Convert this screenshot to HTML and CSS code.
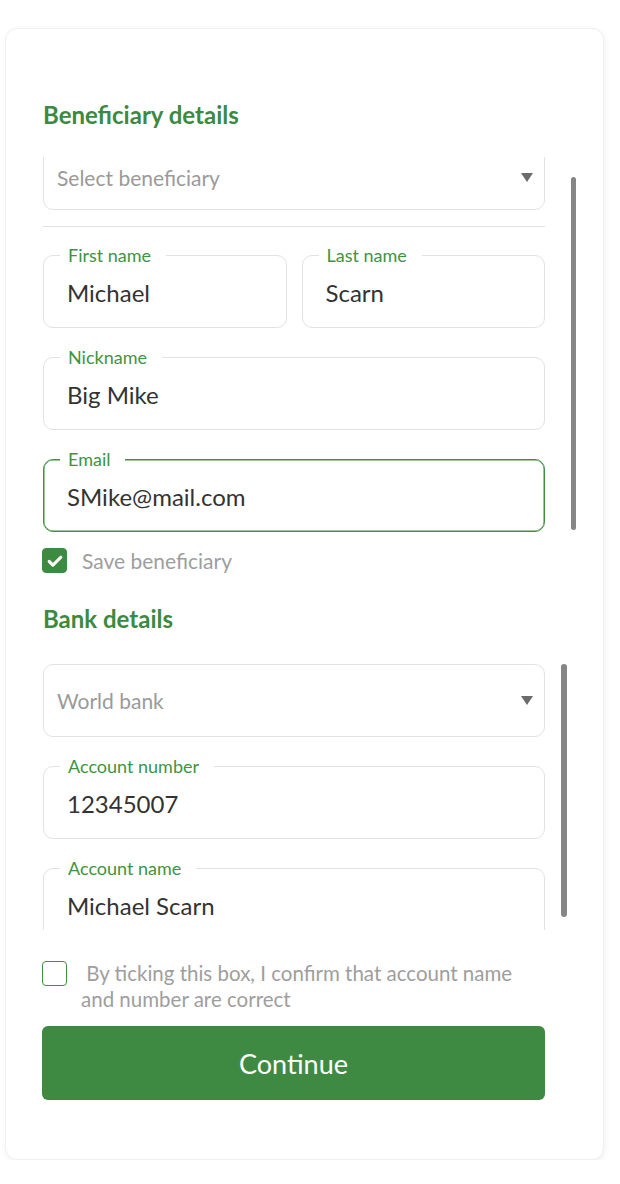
FILE: index.html
```html
<!DOCTYPE html>
<html lang="en">
<head>
<meta charset="utf-8">
<title>Beneficiary details</title>
<link rel="stylesheet" href="styles.css">
</head>
<body>
<div class="card">
  <h2 class="section-title title-beneficiary">Beneficiary details</h2>

  <div class="scroller scroller-one">
    <div class="scroll-content content-one">
      <div class="select select-one">
        <span class="placeholder">Select beneficiary</span>
        <span class="caret"></span>
      </div>
      <div class="divider"></div>
      <div class="row-two">
        <div class="field">
          <span class="label">First name</span>
          <span class="value">Michael</span>
        </div>
        <div class="field">
          <span class="label">Last name</span>
          <span class="value">Scarn</span>
        </div>
      </div>
      <div class="field">
        <span class="label">Nickname</span>
        <span class="value">Big Mike</span>
      </div>
      <div class="field field-focused">
        <span class="label">Email</span>
        <span class="value">SMike@mail.com</span>
      </div>
    </div>
    <div class="thumb thumb-one"></div>
  </div>

  <div class="check-row save-row">
    <span class="checkbox checked">
      <svg viewBox="0 0 24 24" width="20" height="20"><path d="M5 12.5l4.5 4.5L19 7.5" fill="none" stroke="#fff" stroke-width="3.8" stroke-linecap="round" stroke-linejoin="round"/></svg>
    </span>
    <span class="check-text">Save beneficiary</span>
  </div>

  <h2 class="section-title title-bank">Bank details</h2>

  <div class="scroller scroller-two">
    <div class="scroll-content content-two">
      <div class="select">
        <span class="placeholder">World bank</span>
        <span class="caret"></span>
      </div>
      <div class="field">
        <span class="label">Account number</span>
        <span class="value">12345007</span>
      </div>
      <div class="field">
        <span class="label">Account name</span>
        <span class="value">Michael Scarn</span>
      </div>
    </div>
    <div class="thumb thumb-two"></div>
  </div>

  <div class="check-row confirm-row">
    <span class="checkbox"></span>
    <span class="confirm-text">&nbsp;By ticking this box, I confirm that account name and number are correct</span>
  </div>

  <button class="continue" type="button">Continue</button>
</div>
</body>
</html>
```

FILE: styles.css
```css
* { box-sizing: border-box; }

html, body {
  margin: 0;
  padding: 0;
  background: #ffffff;
}

body {
  font-family: "Lato", "Noto Sans", sans-serif;
  color: #333333;
}

.card {
  margin: 28px 0 0 5px;
  width: 599px;
  height: 1132px;
  background: #ffffff;
  border: 1px solid #f0f0f0;
  border-radius: 12px;
  box-shadow: 1px 2px 6px rgba(0, 0, 0, 0.06);
  padding: 0 0 0 37px;
  display: flex;
  flex-direction: column;
}

.section-title {
  margin: 0;
  font-size: 24px;
  font-weight: 700;
  line-height: 28px;
  color: #3c8a3f;
}

.title-beneficiary {
  margin-top: 72px;
}

.title-bank {
  margin-top: 32px;
}

.scroller {
  position: relative;
  overflow: hidden;
  width: 545px;
}

.scroller-one {
  margin-top: 28px;
  height: 381px;
}

.scroller-two {
  margin-top: 31px;
  height: 266px;
}

.scroll-content {
  width: 502px;
  display: flex;
  flex-direction: column;
  gap: 29px;
}

.content-one {
  margin-top: -13px;
}

.select {
  height: 73px;
  border: 1px solid #e2e2e2;
  border-radius: 10px;
  display: flex;
  align-items: center;
  justify-content: space-between;
  padding: 0 11px 0 13px;
}

.select-one {
  height: 66px;
}

.placeholder {
  font-size: 21px;
  color: #9a9a9a;
}

.caret {
  width: 0;
  height: 0;
  border-left: 6px solid transparent;
  border-right: 6px solid transparent;
  border-top: 9px solid #6b6b6b;
}

.divider {
  height: 1px;
  background: #e2e2e2;
  margin: -13px 0 -1px;
}

.row-two {
  display: grid;
  grid-template-columns: 1fr 1fr;
  gap: 15px;
}

.field {
  position: relative;
  height: 73px;
  border: 1px solid #e2e2e2;
  border-radius: 10px;
  display: flex;
  align-items: center;
  padding: 1px 0 0 23px;
}

.field-focused {
  border-color: #3f8f43;
  box-shadow: inset 0 0 0 0.5px #3f8f43;
}

.label {
  position: absolute;
  top: -11px;
  left: 16px;
  padding: 0 15px 0 8px;
  background: #ffffff;
  font-size: 18px;
  line-height: 20px;
  color: #3e9443;
}

.value {
  font-size: 24px;
  color: #333333;
}

.thumb {
  position: absolute;
  border-radius: 3px;
  background: #868686;
}

.thumb-one {
  left: 528px;
  top: 20px;
  width: 5px;
  height: 353px;
}

.thumb-two {
  left: 518px;
  top: 0;
  width: 6px;
  height: 253px;
}

.check-row {
  display: flex;
  align-items: flex-start;
}

.save-row {
  margin-top: 10px;
  align-items: center;
  gap: 15px;
}

.checkbox {
  flex: none;
  width: 25px;
  height: 25px;
  margin-left: -1px;
  border: 1.5px solid #3f8f43;
  border-radius: 4px;
  background: #ffffff;
  display: flex;
  align-items: center;
  justify-content: center;
}

.checkbox.checked {
  background: #3d8b40;
  border-color: #3d8b40;
}

.check-text {
  font-size: 21px;
  color: #9e9e9e;
}

.confirm-row {
  margin-top: 31px;
  gap: 15px;
}

.confirm-text {
  font-size: 20.5px;
  line-height: 26px;
  color: #9e9e9e;
  margin-top: -1px;
  margin-left: -1px;
  width: 450px;
}

.continue {
  margin: 14px 0 0 -1px;
  width: 503px;
  height: 74px;
  border: none;
  border-radius: 6px;
  background: #3f8a42;
  color: #ffffff;
  font-family: "Lato", "Noto Sans", sans-serif;
  font-size: 27px;
  cursor: pointer;
}
```
